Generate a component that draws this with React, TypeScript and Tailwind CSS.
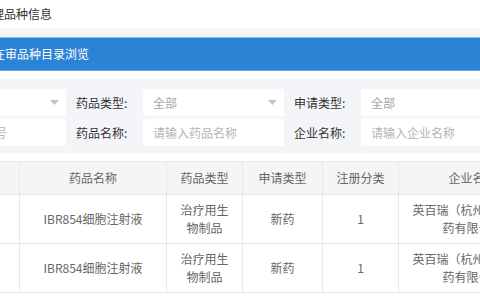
import React from "react";

const rows = [
  { no: "1", name: "IBR854细胞注射液", type: "治疗用生物制品", apply: "新药", cls: "1", company: "英百瑞（杭州）生物医药有限公司" },
  { no: "2", name: "IBR854细胞注射液", type: "治疗用生物制品", apply: "新药", cls: "1", company: "英百瑞（杭州）生物医药有限公司" },
];

function Field({ label, value, select, placeholder }: { label: string; value?: string; select?: boolean; placeholder?: boolean }) {
  return (
    <div className="flex items-center shrink-0">
      <span className="w-[67px] text-[12px] text-[#333]">{label}</span>
      <div className="w-[141px] h-[27px] bg-white rounded-[2px] pl-[10px] pr-[7px] flex items-center justify-between">
        <span className={`text-[12px] ${placeholder ? "text-[#b4b4b4]" : "text-[#a6a6a6]"}`}>{value}</span>
        {select && (
          <svg width="9" height="5" viewBox="0 0 9 5">
            <path d="M0 0h9L4.5 5z" fill="#c0c4cc" />
          </svg>
        )}
      </div>
    </div>
  );
}

export default function App() {
  return (
    <div className="w-[480px] h-[300px] overflow-hidden bg-white font-['Noto_Sans_CJK_SC',sans-serif]">
      {/* page title */}
      <div className="h-[28px] flex items-center ml-[-20px] text-[12px] text-[#333] whitespace-nowrap">受理品种信息</div>
      <div className="h-[9px] bg-[#f6f6f6]" />

      {/* blue heading bar */}
      <div className="h-[34px] bg-[#2b83d6] border-t border-[#8fbbe8] border-b border-b-[#6ea6e2] flex items-center ml-[-7px] text-[12px] text-white whitespace-nowrap">
        在审品种目录浏览
      </div>
      <div className="h-[8px] bg-white" />

      {/* filters */}
      <div className="bg-[#f4f5f9] pt-[10px] pb-[7px] flex flex-col gap-[3px]">
        <div className="flex gap-[10px] ml-[-142px]">
          <Field label="审评状态:" value="全部" select />
          <Field label="药品类型:" value="全部" select />
          <Field label="申请类型:" value="全部" select />
        </div>
        <div className="flex gap-[10px] ml-[-142px]">
          <Field label="受理号:" value="请输入受理号" placeholder />
          <Field label="药品名称:" value="请输入药品名称" placeholder />
          <Field label="企业名称:" value="请输入企业名称" placeholder />
        </div>
      </div>
      <div className="h-[8px] bg-white" />

      {/* table */}
      <table className="table-fixed border-collapse ml-[-61px] w-[607px] text-[12px] text-[#666]">
        <colgroup>
          <col className="w-[80px]" />
          <col className="w-[147px]" />
          <col className="w-[76px]" />
          <col className="w-[80px]" />
          <col className="w-[76px]" />
          <col className="w-[148px]" />
        </colgroup>
        <thead>
          <tr className="h-[33px] bg-[#f5f5f5]">
            {["序号", "药品名称", "药品类型", "申请类型", "注册分类", "企业名称"].map((h) => (
              <th key={h} className="border border-[#e8e8e8] font-normal text-center">{h}</th>
            ))}
          </tr>
        </thead>
        <tbody>
          {rows.map((r) => (
            <tr key={r.no} className="h-[49px]">
              <td className="border border-[#e8e8e8] text-center">{r.no}</td>
              <td className="border border-[#e8e8e8] text-center">{r.name}</td>
              <td className="border border-[#e8e8e8] text-center px-[8px] leading-[18px]">
                治疗用生
                <br />
                物制品
              </td>
              <td className="border border-[#e8e8e8] text-center">{r.apply}</td>
              <td className="border border-[#e8e8e8] text-center">{r.cls}</td>
              <td className="border border-[#e8e8e8] text-center px-[4px] leading-[18px] whitespace-nowrap">
                英百瑞（杭州）生物医
                <br />
                药有限公司
              </td>
            </tr>
          ))}
        </tbody>
      </table>
    </div>
  );
}
